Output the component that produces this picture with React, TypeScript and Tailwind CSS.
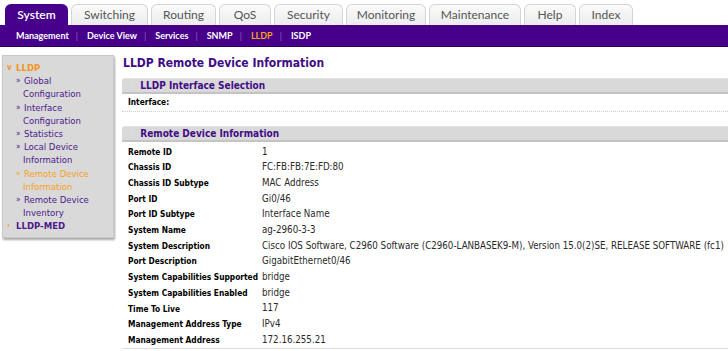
import React from "react";

const tabs = ["System", "Switching", "Routing", "QoS", "Security", "Monitoring", "Maintenance", "Help", "Index"];
const tabWidths = ["w-[63px]", "w-[77px]", "w-[65px]", "w-[52px]", "w-[69px]", "w-[80px]", "w-[92px]", "w-[52px]", "w-[54px]"];
const subNav = ["Management", "Device View", "Services", "SNMP", "LLDP", "ISDP"];

const rows: [string, string][] = [
	["Remote ID", "1"],
	["Chassis ID", "FC:FB:FB:7E:FD:80"],
	["Chassis ID Subtype", "MAC Address"],
	["Port ID", "Gi0/46"],
	["Port ID Subtype", "Interface Name"],
	["System Name", "ag-2960-3-3"],
	["System Description", "Cisco IOS Software, C2960 Software (C2960-LANBASEK9-M), Version 15.0(2)SE, RELEASE SOFTWARE (fc1)"],
	["Port Description", "GigabitEthernet0/46"],
	["System Capabilities Supported", "bridge"],
	["System Capabilities Enabled", "bridge"],
	["Time To Live", "117"],
	["Management Address Type", "IPv4"],
	["Management Address", "172.16.255.21"],
];

const sideItems: { label: string[]; active?: boolean }[] = [
	{ label: ["Global", "Configuration"] },
	{ label: ["Interface", "Configuration"] },
	{ label: ["Statistics"] },
	{ label: ["Local Device", "Information"] },
	{ label: ["Remote Device", "Information"], active: true },
	{ label: ["Remote Device", "Inventory"] },
];

function SectionHeader({ title }: { title: string }) {
	return (
		<div className="flex items-center h-[16px] bg-[#d9d9d9] border-t border-t-[#e4e4e4] border-b-2 border-b-[#c4c4c4] pl-[8px] rounded-tl-[3px]">
			<span className="text-[#f2f2f2] text-[7px] leading-none mr-[8px] tracking-[-1px]">::</span>
			<span className="text-[#3f0c86] font-bold text-[10px] whitespace-nowrap">{title}</span>
		</div>
	);
}

export default function App() {
	return (
		<div className="w-[728px] h-[351px] overflow-hidden bg-white font-['DejaVu_Sans_Condensed','Liberation_Sans',sans-serif]">
			<div className="flex items-end h-[25px] pl-[5px] gap-[3px] bg-white">
				{tabs.map((t, i) => (
					<div
						key={t}
						className={
							i === 0
								? `${tabWidths[i]} h-[21px] shrink-0 rounded-t-[6px] bg-[#460089] text-white flex items-center justify-center text-[12px] font-['Lato',sans-serif] font-semibold`
								: `${tabWidths[i]} h-[21px] shrink-0 rounded-t-[6px] bg-gradient-to-b from-[#fbfbfb] to-[#ececec] border border-b-0 border-[#d4d4d4] text-[#555] flex items-center justify-center text-[12px] font-['Lato',sans-serif]`
						}
					>
						{t}
					</div>
				))}
			</div>
			<div className="h-[22px] bg-[#460089] border-b border-b-[#2d0059] flex items-center pl-[16px] text-[9px] font-bold font-['Lato',sans-serif] text-white">
				{subNav.map((s, i) => (
					<React.Fragment key={s}>
						{i > 0 && <span className="ml-[7px] mr-[9px] text-[#8f6cc0] font-normal">|</span>}
						<span className={s === "LLDP" ? "text-[#f7a11a]" : ""}>{s}</span>
					</React.Fragment>
				))}
			</div>
			<div className="flex pt-[8px]">
				<div className="w-[112px] ml-[2px] shrink-0 self-start">
					<div className="bg-[#d9d9d9] border border-[#c8c8c8] shadow-[1px_2px_2px_#aaa] pt-[5px] pb-[4px] pl-[4px] text-[9.5px] leading-[13.2px] whitespace-nowrap">
						<div className="flex items-center text-[#f7941d] font-bold">
							<span className="w-[9px] text-[8px]">v</span>LLDP
						</div>
						{sideItems.map((it) => (
							<div key={it.label.join()} className={`pl-[9px] ${it.active ? "text-[#f7a11a]" : "text-[#4b1a8c]"}`}>
								<div className="flex items-center">
									<span className="w-[8px] text-[8px]">»</span>
									{it.label[0]}
								</div>
								{it.label[1] && <div className="pl-[7px]">{it.label[1]}</div>}
							</div>
						))}
						<div className="flex items-center text-[#4b1a8c] font-bold">
							<span className="w-[9px] text-[#f7941d] text-[8px]">›</span>LLDP-MED
						</div>
					</div>
				</div>
				<div className="flex-1 min-w-0 ml-[8px]">
					<div className="text-[#3f0c86] font-bold text-[12px] leading-[16px] pl-[1px] mb-[7px] whitespace-nowrap">LLDP Remote Device Information</div>
					<SectionHeader title="LLDP Interface Selection" />
					<div className="h-[18px] flex items-center pl-[6px] text-[8.3px] font-bold text-black border-b border-dotted border-b-[#cfcfcf]">
						Interface:
					</div>
					<div className="h-[14px]" />
					<SectionHeader title="Remote Device Information" />
					<div className="pt-[2px] border-b border-b-[#dcdcdc]">
						{rows.map(([k, v]) => (
							<div key={k} className="flex h-[15.7px] items-center whitespace-nowrap">
								<div className="w-[140px] pl-[6px] font-bold text-black text-[8.3px] shrink-0">{k}</div>
								<div className="text-[#2a2a2a] text-[9.7px]">{v}</div>
							</div>
						))}
					</div>
				</div>
			</div>
		</div>
	);
}
